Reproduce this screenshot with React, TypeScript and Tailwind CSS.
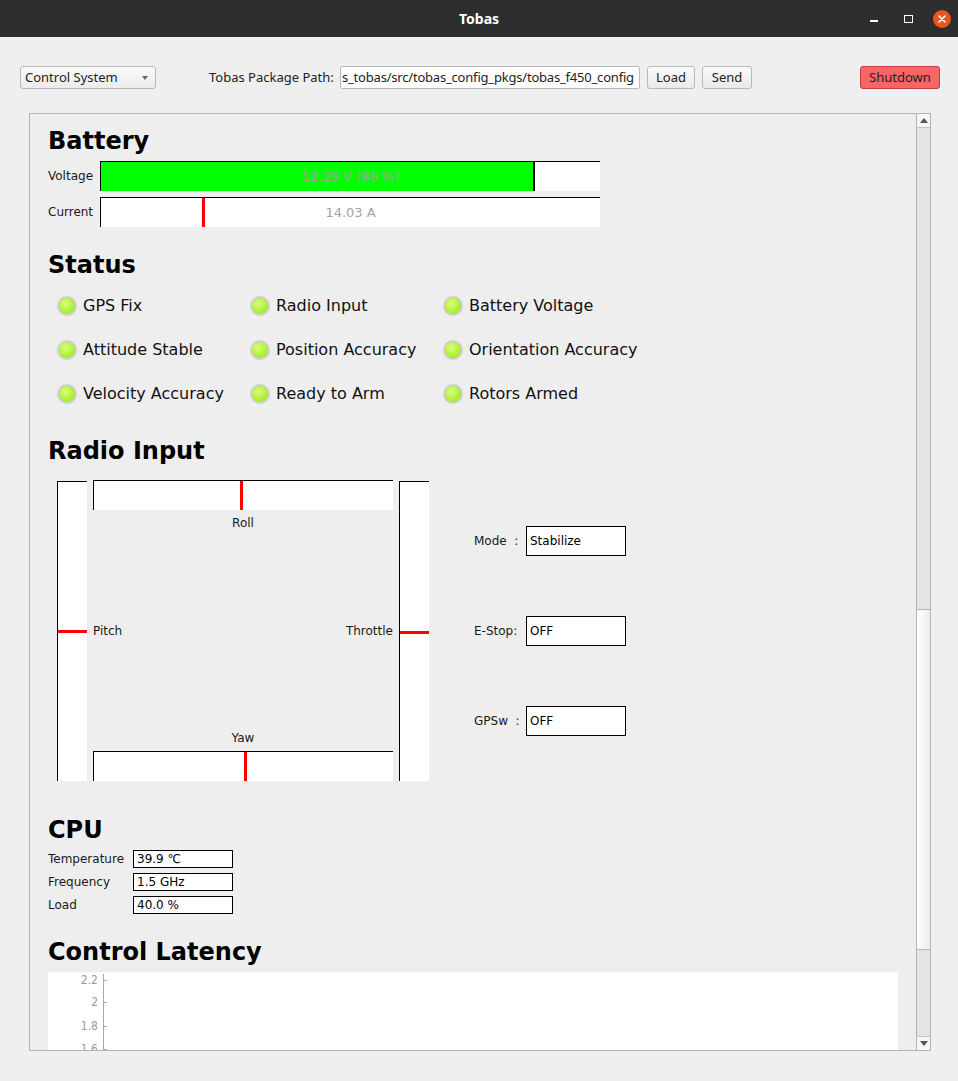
import { ReactNode } from "react";

const SANS = "font-['DejaVu_Sans',sans-serif]";
const UI = "font-['Noto_Sans',sans-serif]";

const STATUS = [
    ["GPS Fix", "Radio Input", "Battery Voltage"],
    ["Attitude Stable", "Position Accuracy", "Orientation Accuracy"],
    ["Velocity Accuracy", "Ready to Arm", "Rotors Armed"],
];

function Heading({ children }: { children: ReactNode }) {
    return <h2 className={`${SANS} text-[24px] leading-[28px] font-bold text-black`}>{children}</h2>;
}

function Led() {
    return (
        <span className="w-[20px] h-[20px] rounded-full border-2 border-[#cfcfcf] bg-[radial-gradient(circle_at_40%_35%,#d6ff7a,#a8ec2a_70%)] shrink-0" />
    );
}

function Button({ children, className = "" }: { children: ReactNode; className?: string }) {
    return (
        <button
            className={`h-[23px] rounded-[3px] border border-[#b9b9b9] bg-gradient-to-b from-[#fafafa] to-[#e9e9e9] text-[13px] text-[#222] flex items-center justify-center ${className}`}
        >
            {children}
        </button>
    );
}

function ValueBox({ label, value }: { label: string; value: string }) {
    return (
        <div className="flex items-center">
            <span className="w-[52px] whitespace-pre text-[12px] text-[#1a1a1a]">{label}</span>
            <div className="w-[100px] h-[30px] border border-black bg-white flex items-center pl-[3px] text-[12px] text-black">
                {value}
            </div>
        </div>
    );
}

function CpuRow({ label, value }: { label: string; value: string }) {
    return (
        <div className="flex items-center h-[18px]">
            <span className="w-[85px] text-[12px] text-[#1a1a1a]">{label}</span>
            <div className="w-[100px] h-[18px] border border-black bg-white flex items-center pl-[3px] text-[12px] text-black">
                {value}
            </div>
        </div>
    );
}

function LatencyChart() {
    // only the top of the plot is visible in the scroll view
    const ticks = [
        { v: "2.2", y: 8 },
        { v: "2", y: 30 },
        { v: "1.8", y: 54 },
        { v: "1.6", y: 77 },
    ];
    return (
        <svg width="850" height="140" className="block bg-white">
            <line x1="55.5" y1="2" x2="55.5" y2="140" stroke="#a8a8a8" strokeWidth="1" />
            {ticks.map((t) => (
                <g key={t.v}>
                    <line x1="55" y1={t.y + 0.5} x2="59" y2={t.y + 0.5} stroke="#a8a8a8" strokeWidth="1" />
                    <text
                        x="50"
                        y={t.y + 4}
                        textAnchor="end"
                        fontSize="12"
                        fill="#9a9a9a"
                        fontFamily="'DejaVu Sans Condensed', 'DejaVu Sans', sans-serif"
                    >
                        {t.v}
                    </text>
                </g>
            ))}
        </svg>
    );
}

function Scrollbar() {
    return (
        <div className="w-[14px] border-l border-[#b4b4b4] bg-[#e4e4e4] flex flex-col">
            <div className="h-[14px] bg-[#f6f6f6] border-b border-[#c4c4c4] flex items-center justify-center">
                <span className="w-0 h-0 border-l-[4px] border-r-[4px] border-b-[5px] border-l-transparent border-r-transparent border-b-[#555]" />
            </div>
            <div className="h-[481px]" />
            <div className="h-[341px] border-y border-[#b4b4b4] bg-gradient-to-r from-[#ffffff] to-[#ececec]" />
            <div className="flex-1" />
            <div className="h-[14px] bg-[#f6f6f6] border-t border-[#c4c4c4] flex items-center justify-center">
                <span className="w-0 h-0 border-l-[4px] border-r-[4px] border-t-[5px] border-l-transparent border-r-transparent border-t-[#555]" />
            </div>
        </div>
    );
}

function RadioInput() {
    return (
        <div className="flex ml-[9px] mt-[15px]">
            {/* Pitch bar */}
            <div className="relative w-[30px] h-[300px] mt-[1px] border-l border-t border-black bg-white">
                <div className="absolute left-0 right-0 top-[148px] h-[3px] bg-[#ff0000]" />
            </div>

            <div className="ml-[6px] w-[300px] h-[301px] flex flex-col">
                <div className="relative h-[30px] border-l border-t border-black bg-white">
                    <div className="absolute top-0 bottom-0 left-[146px] w-[3px] bg-[#ff0000]" />
                </div>
                <div className="h-[26px] flex items-center justify-center text-[12px] text-[#1a1a1a]">Roll</div>
                <div className="flex-1 flex items-center justify-between text-[12px] text-[#1a1a1a]">
                    <span>Pitch</span>
                    <span>Throttle</span>
                </div>
                <div className="h-[26px] flex items-center justify-center text-[12px] text-[#1a1a1a]">Yaw</div>
                <div className="relative h-[30px] border-l border-t border-black bg-white">
                    <div className="absolute top-0 bottom-0 left-[150px] w-[3px] bg-[#ff0000]" />
                </div>
            </div>

            {/* Throttle bar */}
            <div className="relative ml-[6px] w-[30px] h-[300px] mt-[1px] border-l border-t border-black bg-white">
                <div className="absolute left-0 right-0 top-[149px] h-[3px] bg-[#ff0000]" />
            </div>

            <div className="ml-[45px] h-[301px] flex flex-col justify-center gap-[60px]">
                <ValueBox label="Mode  :" value="Stabilize" />
                <ValueBox label="E-Stop:" value="OFF" />
                <ValueBox label="GPSw  :" value="OFF" />
            </div>
        </div>
    );
}

export default function App() {
    return (
        <div className={`w-[958px] h-[1081px] bg-[#efefef] flex flex-col overflow-hidden ${SANS}`}>
            {/* Title bar */}
            <div className="relative h-[37px] bg-[#2e2e2e] flex items-center justify-center shrink-0">
                <span className={`${UI} text-[14px] font-bold text-white`}>Tobas</span>
                <div className="absolute right-[7px] top-0 h-full flex items-center">
                    <span className="w-[8px] h-[2px] bg-white mt-[5px] mr-[26px]" />
                    <span className="w-[9px] h-[8px] border border-white mr-[20px]" />
                    <span className="w-[18px] h-[18px] rounded-full bg-[#e95420] flex items-center justify-center">
                        <svg width="8" height="8" viewBox="0 0 8 8">
                            <path d="M1 1L7 7M7 1L1 7" stroke="white" strokeWidth="1.6" strokeLinecap="round" />
                        </svg>
                    </span>
                </div>
            </div>

            {/* Toolbar */}
            <div className={`${UI} flex items-center h-[23px] mt-[29px] pl-[20px] shrink-0 text-[13px] text-[#222]`}>
                <div className="w-[136px] h-[23px] rounded-[3px] border border-[#b9b9b9] bg-gradient-to-b from-[#fafafa] to-[#ececec] flex items-center justify-between pl-[4px] pr-[7px]">
                    <span>Control System</span>
                    <span className="w-0 h-0 border-l-[3px] border-r-[3px] border-t-[4px] border-l-transparent border-r-transparent border-t-[#666]" />
                </div>
                <span className="ml-[53px] w-[131px] whitespace-nowrap">Tobas Package Path:</span>
                <div className="w-[300px] h-[23px] rounded-[2px] border border-[#b9b9b9] bg-white flex items-center overflow-hidden whitespace-nowrap pl-px tracking-[-0.2px]">
                    s_tobas/src/tobas_config_pkgs/tobas_f450_config
                </div>
                <Button className="ml-[7px] w-[48px]">Load</Button>
                <Button className="ml-[7px] w-[50px]">Send</Button>
                <button className="ml-auto mr-[18px] w-[80px] h-[23px] rounded-[3px] border border-[#c43a3a] bg-[#f76565] text-[13px] text-[#222] flex items-center justify-center">
                    Shutdown
                </button>
            </div>

            {/* Scroll area */}
            <div className="ml-[29px] mt-[24px] w-[902px] h-[938px] border border-[#b4b4b4] flex shrink-0">
                <div className="flex-1 overflow-hidden bg-[#eeeeee] pl-[18px] pr-[18px] pt-[13px]">
                    <Heading>Battery</Heading>

                    <div className="flex items-center mt-[6px]">
                        <span className="w-[52px] text-[12px] text-[#1a1a1a]">Voltage</span>
                        <div className="relative w-[500px] h-[30px] border-l border-t border-black bg-white">
                            <div className="absolute left-0 top-0 bottom-0 w-[434px] bg-[#00ff00] border-r-2 border-black" />
                            <div className="absolute inset-0 flex items-center justify-center text-[13px] text-[#a3a3a3]">
                                12.29 V (86 %)
                            </div>
                        </div>
                    </div>
                    <div className="flex items-center mt-[6px]">
                        <span className="w-[52px] text-[12px] text-[#1a1a1a]">Current</span>
                        <div className="relative w-[500px] h-[30px] border-l border-t border-black bg-white">
                            <div className="absolute top-0 bottom-0 left-[101px] w-[3px] bg-[#ff0000]" />
                            <div className="absolute inset-0 flex items-center justify-center text-[13px] text-[#a3a3a3]">
                                14.03 A
                            </div>
                        </div>
                    </div>

                    <div className="mt-[24px]">
                        <Heading>Status</Heading>
                    </div>
                    <div className="mt-[5px] ml-[9px] grid grid-cols-[193px_193px_193px]">
                        {STATUS.flat().map((s) => (
                            <div key={s} className="h-[44px] flex items-center gap-[6px]">
                                <Led />
                                <span className="text-[16px] text-[#111] whitespace-nowrap">{s}</span>
                            </div>
                        ))}
                    </div>

                    <div className="mt-[21px]">
                        <Heading>Radio Input</Heading>
                    </div>
                    <RadioInput />

                    <div className="mt-[35px]">
                        <Heading>CPU</Heading>
                    </div>
                    <div className="mt-[6px] flex flex-col gap-[5px]">
                        <CpuRow label="Temperature" value="39.9 ℃" />
                        <CpuRow label="Frequency" value="1.5 GHz" />
                        <CpuRow label="Load" value="40.0 %" />
                    </div>

                    <div className="mt-[24px]">
                        <Heading>Control Latency</Heading>
                    </div>
                    <div className="mt-[6px]">
                        <LatencyChart />
                    </div>
                </div>
                <Scrollbar />
            </div>
        </div>
    );
}
